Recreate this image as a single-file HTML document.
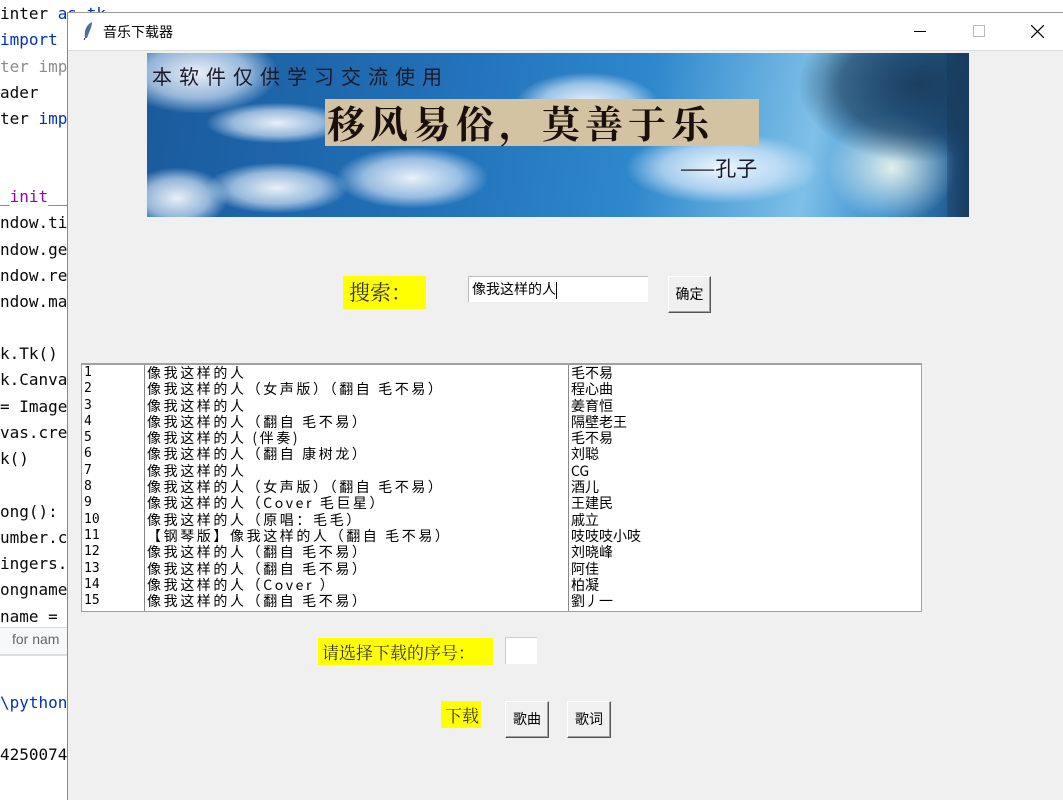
<!DOCTYPE html>
<html><head><meta charset="utf-8"><style>
*{margin:0;padding:0;box-sizing:border-box}
body{width:1063px;height:800px;overflow:hidden;background:#fff;position:relative;font-family:"Liberation Sans","Noto Sans CJK SC",sans-serif}
.code{position:absolute;left:0;font-family:"DejaVu Sans Mono","Liberation Mono",monospace;font-size:16px;color:#080808;white-space:pre;line-height:20px}
.win{position:absolute;left:67px;top:12px;width:996px;height:788px;background:#f0f0f0;border-left:1px solid #888;border-top:1px solid #999}
.title{position:absolute;left:0;top:0;width:100%;height:38px;background:#fff;border-bottom:1px solid #ddd}
.abs{position:absolute}
.banner{position:absolute;left:79px;top:40px;width:822px;height:164px;overflow:hidden;background:linear-gradient(100deg,#1a5a9c 0%,#2270b8 35%,#2f88cc 60%,#7fc0e8 80%,#3a8fd0 90%,#1d4f80 100%)}
.cloud{position:absolute;background:radial-gradient(ellipse at center,rgba(255,255,255,.9) 0%,rgba(230,240,255,.6) 45%,rgba(255,255,255,0) 72%)}
.yl{position:absolute;background:#ffff00;font-family:"Noto Serif CJK SC","WenQuanYi Zen Hei",serif;color:#333;white-space:nowrap}
.btn{position:absolute;background:#f0f0f0;border:1px solid;border-color:#fff #555 #555 #fff;box-shadow:inset -1px -1px 0 #a0a0a0;font-size:14px;text-align:center;font-family:"Noto Sans CJK SC",sans-serif;color:#000}
.list{position:absolute;left:13px;top:350px;width:841px;height:249px;background:#fff;border:1px solid #a0a0a0;border-top:2px solid #a0a0a0;overflow:hidden;font-family:"WenQuanYi Zen Hei","Noto Sans CJK SC",sans-serif;font-size:14px;color:#000}
.col{position:absolute;top:0;line-height:16.3px;white-space:pre;letter-spacing:2.6px}
.sep{position:absolute;top:0;width:1px;height:100%;background:#888}
</style></head><body>
<div class="code" style="top:4px">inter <span style="color:#0033b3">as tk</span></div>
<div class="code" style="top:30px;color:#0033b3">import I</div>
<div class="code" style="top:57px;color:#8c8c8c">ter impo</div>
<div class="code" style="top:83px">ader</div>
<div class="code" style="top:109px">ter <span style="color:#0033b3">impo</span></div>
<div class="code" style="top:187px;color:#9b00a8">_init__(</div>
<div class="code" style="top:213px">ndow.ti</div>
<div class="code" style="top:240px">ndow.ge</div>
<div class="code" style="top:266px">ndow.re</div>
<div class="code" style="top:292px">ndow.ma</div>
<div class="code" style="top:344px">k.Tk()</div>
<div class="code" style="top:370px">k.Canva</div>
<div class="code" style="top:397px">= ImageT</div>
<div class="code" style="top:423px">vas.crea</div>
<div class="code" style="top:449px">k()</div>
<div class="code" style="top:502px">ong():</div>
<div class="code" style="top:528px">umber.c</div>
<div class="code" style="top:554px">ingers.</div>
<div class="code" style="top:580px">ongname</div>
<div class="code" style="top:607px">name = e</div>
<div class="abs" style="left:0;top:627px;width:67px;height:28px;background:#f7f8fa;border-top:1px solid #ddd;border-bottom:1px solid #ddd"></div>
<div class="abs" style="left:12px;top:631px;font-size:14px;color:#666">for nam</div>
<div class="abs" style="left:0;top:655px;width:67px;height:145px;background:#fff;border-top:1px solid #ddd"></div>
<div class="code" style="top:693px;color:#0033b3">\python</div>
<div class="code" style="top:745px">4250074</div>

<div class="win">
 <div class="title">
  <svg class="abs" style="left:14px;top:8px" width="12" height="20" viewBox="0 0 12 20"><path d="M10 1 C4 4 2 10 3 17 L5 17 C7 11 10 6 10 1Z" fill="#4a6fa0"/><path d="M3 17 L2 19" stroke="#333"/></svg>
  <div class="abs" style="left:35px;top:9px;font-size:14px;font-family:'Noto Sans CJK SC',sans-serif;color:#000">音乐下载器</div>
 </div>
 <div class="abs" style="left:846px;top:18px;width:12px;height:1px;background:#000"></div>
 <div class="abs" style="left:905px;top:12px;width:12px;height:12px;border:1px solid #bbb"></div>
 <svg class="abs" style="left:963px;top:12px" width="13" height="13"><path d="M0 0L13 13M13 0L0 13" stroke="#000" stroke-width="1.2"/></svg>

 <div class="banner">
  <div class="cloud" style="left:-30px;top:-20px;width:160px;height:80px"></div>
  <div class="cloud" style="left:60px;top:50px;width:140px;height:40px"></div>
  <div class="cloud" style="left:190px;top:95px;width:150px;height:60px"></div>
  <div class="cloud" style="left:-20px;top:115px;width:100px;height:60px"></div>
  <div class="cloud" style="left:60px;top:110px;width:140px;height:50px"></div>
  <div class="cloud" style="left:370px;top:20px;width:140px;height:60px"></div>
  <div class="cloud" style="left:480px;top:80px;width:190px;height:70px"></div>
  <div class="cloud" style="left:680px;top:60px;width:130px;height:110px;background:radial-gradient(ellipse at center,rgba(255,255,240,.85),rgba(255,255,255,0) 70%)"></div>
  <div class="abs" style="left:650px;top:-20px;width:200px;height:130px;background:radial-gradient(ellipse at 60% 40%,rgba(25,55,85,.9),rgba(20,50,80,.6) 45%,rgba(0,0,0,0) 70%)"></div>
  <div class="abs" style="left:800px;top:0;width:22px;height:164px;background:linear-gradient(90deg,rgba(20,50,80,.3),#1a3c60)"></div>
  <div class="abs" style="left:5px;top:8px;font-size:20px;color:#1a1a2a;letter-spacing:7px;font-family:'WenQuanYi Zen Hei',sans-serif">本软件仅供学习交流使用</div>
  <div class="abs" style="left:178px;top:46px;width:434px;height:47px;background:#d3c3a3"></div>
  <div class="abs" style="left:180px;top:44px;font-size:38px;font-weight:bold;color:#1a0f0a;letter-spacing:5px;font-family:'Noto Serif CJK SC',serif;line-height:50px">移风易俗，莫善于乐</div>
  <div class="abs" style="left:533px;top:100px;font-size:21px;color:#1a1a2a;font-family:'Noto Sans CJK SC',sans-serif">——孔子</div>
 </div>

 <div class="yl" style="left:275px;top:263px;width:83px;height:33px;font-size:21px;line-height:33px;padding-left:6px">搜索：</div>
 <div class="abs" style="left:400px;top:263px;width:180px;height:26px;background:#fff;border:1px solid #bbb;border-right:none;border-bottom:none;font-size:14px;line-height:24px;padding-left:3px;font-family:'Noto Sans CJK SC',sans-serif">像我这样的人<span style="display:inline-block;width:1px;height:17px;background:#000;vertical-align:middle"></span></div>
 <div class="btn" style="left:600px;top:263px;width:43px;height:37px;line-height:35px">确定</div>

 <div class="list">
  <div class="sep" style="left:62px"></div>
  <div class="sep" style="left:486px"></div>
  <div class="col" style="left:2px;letter-spacing:0;font-family:'DejaVu Sans Mono','Liberation Mono',monospace;font-size:13px">1
2
3
4
5
6
7
8
9
10
11
12
13
14
15</div>
  <div class="col" style="left:65px">像我这样的人
像我这样的人（女声版）（翻自 毛不易）
像我这样的人
像我这样的人（翻自 毛不易）
像我这样的人 (伴奏)
像我这样的人（翻自 康树龙）
像我这样的人
像我这样的人（女声版）（翻自 毛不易）
像我这样的人（Cover 毛巨星）
像我这样的人（原唱：毛毛）
【钢琴版】像我这样的人（翻自 毛不易）
像我这样的人（翻自 毛不易）
像我这样的人（翻自 毛不易）
像我这样的人（Cover ）
像我这样的人（翻自 毛不易）</div>
  <div class="col" style="left:489px;letter-spacing:0">毛不易
程心曲
姜育恒
隔壁老王
毛不易
刘聪
CG
酒儿
王建民
戚立
吱吱吱小吱
刘晓峰
阿佳
柏凝
劉丿一</div>
 </div>

 <div class="yl" style="left:250px;top:625px;width:175px;height:27px;font-size:17px;line-height:27px;padding-left:4px">请选择下载的序号：</div>
 <div class="abs" style="left:437px;top:624px;width:32px;height:27px;background:#fff;border:1px solid #ccc;border-right:none;border-bottom:none"></div>
 <div class="yl" style="left:373px;top:688px;width:40px;height:27px;font-size:17px;line-height:27px;padding-left:4px">下载</div>
 <div class="btn" style="left:437px;top:688px;width:44px;height:37px;line-height:35px">歌曲</div>
 <div class="btn" style="left:499px;top:688px;width:44px;height:37px;line-height:35px">歌词</div>
</div>
</body></html>
